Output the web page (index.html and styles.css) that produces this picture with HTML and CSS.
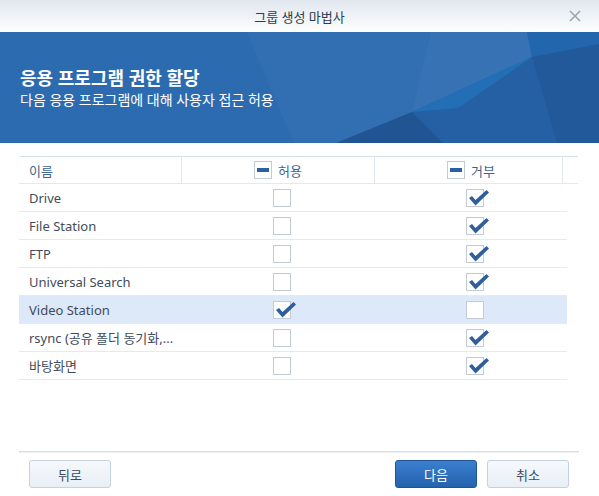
FILE: index.html
```html
<!DOCTYPE html>
<html lang="ko">
<head>
    <meta charset="UTF-8">
    <meta name="viewport" content="width=device-width, initial-scale=1.0">
    <title>그룹 생성 마법사</title>
    <link rel="stylesheet" href="styles.css">
</head>
<body>
    <div class="dialog">
        <div class="titlebar">
            <span></span>
            <span class="title">그룹 생성 마법사</span>
            <span class="close">
                <svg width="12" height="12" viewBox="0 0 12 12"><path d="M1 1L11 11M11 1L1 11" stroke="#a0a5ab" stroke-width="1.6"/></svg>
            </span>
        </div>

        <div class="banner">
            <!-- background facets -->
            <svg class="banner-art" width="599" height="111" viewBox="0 0 599 111">
                <polygon points="247,0 431,0 412,80 336,111 294,111" fill="#ffffff" opacity="0.03"/>
                <polygon points="431,0 527,0 532,25 412,80" fill="#ffffff" opacity="0.05"/>
                <polygon points="527,0 599,0 599,12 532,25" fill="#1c63ae" opacity="0.6"/>
                <polygon points="532,25 599,12 599,111 557,111" fill="#1c4d8c" opacity="0.6"/>
                <polygon points="412,80 532,25 557,111 443,111" fill="#1e5599" opacity="0.5"/>
                <polygon points="412,80 532,25 458,76" fill="#1f82cc" opacity="0.45"/>
                <polygon points="336,111 412,80 443,111" fill="#1b4883" opacity="0.65"/>
            </svg>
            <h1>응용 프로그램 권한 할당</h1>
            <p>다음 응용 프로그램에 대해 사용자 접근 허용</p>
        </div>

        <div class="content">
            <div class="grid-head">
                <div class="hcell name">이름</div>
                <div class="hcell allow"><span class="box partial"><span class="bar"></span></span>허용</div>
                <div class="hcell deny"><span class="box partial"><span class="bar"></span></span>거부</div>
                <div class="hcell gutter"></div>
            </div>

            <div class="row">
                <div class="cell name">Drive</div>
                <div class="cell allow"><span class="box"></span></div>
                <div class="cell deny"><span class="box checked"></span></div>
            </div>
            <div class="row">
                <div class="cell name">File Station</div>
                <div class="cell allow"><span class="box"></span></div>
                <div class="cell deny"><span class="box checked"></span></div>
            </div>
            <div class="row">
                <div class="cell name">FTP</div>
                <div class="cell allow"><span class="box"></span></div>
                <div class="cell deny"><span class="box checked"></span></div>
            </div>
            <div class="row">
                <div class="cell name">Universal Search</div>
                <div class="cell allow"><span class="box"></span></div>
                <div class="cell deny"><span class="box checked"></span></div>
            </div>
            <div class="row selected">
                <div class="cell name">Video Station</div>
                <div class="cell allow"><span class="box checked"></span></div>
                <div class="cell deny"><span class="box"></span></div>
            </div>
            <div class="row">
                <div class="cell name">rsync (공유 폴더 동기화,...</div>
                <div class="cell allow"><span class="box"></span></div>
                <div class="cell deny"><span class="box checked"></span></div>
            </div>
            <div class="row">
                <div class="cell name">바탕화면</div>
                <div class="cell allow"><span class="box"></span></div>
                <div class="cell deny"><span class="box checked"></span></div>
            </div>
        </div>

        <div class="footer">
            <button class="btn">뒤로</button>
            <div class="footer-right">
                <button class="btn primary">다음</button>
                <button class="btn">취소</button>
            </div>
        </div>
    </div>

    <script>
        // draw the check mark into every checked box
        document.querySelectorAll(".box.checked").forEach(function (box) {
            box.innerHTML = '<svg class="tick" width="22" height="18" viewBox="0 0 22 18">' +
                '<polygon points="1,8 4,6 7.5,10 18.5,0 21,2.5 7.5,15.5" fill="#2f5f9b"/></svg>';
        });
    </script>
</body>
</html>
```

FILE: styles.css
```css
body {
    margin: 0;
    background: #ffffff;
    font-family: "Noto Sans", "Noto Sans CJK KR", sans-serif;
}
.dialog {
    width: 599px;
    height: 496px;
    display: flex;
    flex-direction: column;
    overflow: hidden;
}
.titlebar {
    height: 32px;
    display: grid;
    grid-template-columns: 1fr auto 1fr;
    align-items: center;
    background: linear-gradient(#e1e7ef, #fdfefe);
}
.title {
    font-size: 13px;
    color: #2c3c52;
}
.close {
    justify-self: end;
    margin-right: 18px;
    display: flex;
}
.banner {
    position: relative;
    height: 111px;
    padding: 34px 0 0 20px;
    box-sizing: border-box;
    background: #2c6bb0;
    color: #ffffff;
    overflow: hidden;
}
.banner-art {
    position: absolute;
    left: 0;
    top: 0;
}
.banner h1 {
    position: relative;
    margin: 0;
    font-size: 18px;
    line-height: 24px;
    font-weight: bold;
}
.banner p {
    position: relative;
    margin: 0;
    font-size: 14px;
    line-height: 20px;
}
.content {
    height: 308px;
    padding: 13px 0 0 19px;
    box-sizing: border-box;
}
.grid-head {
    width: 559px;
    display: grid;
    grid-template-columns: 163px 193px 188px 15px;
    border-top: 1px solid #d6e1ed;
    border-bottom: 1px solid #e4e9ef;
    height: 28px;
    box-sizing: border-box;
}
.hcell {
    display: flex;
    align-items: center;
    font-size: 13px;
    color: #3e6590;
    border-right: 1px solid #dfe7f1;
}
.hcell.name {
    padding-left: 10px;
}
.hcell.allow, .hcell.deny {
    justify-content: center;
    gap: 6px;
}
.hcell.deny {
    padding-left: 5px;
}
.hcell.gutter {
    border-right: none;
}
.row {
    width: 548px;
    height: 28px;
    display: grid;
    grid-template-columns: 162px 202px 184px;
    border-bottom: 1px solid #e6e9ed;
    box-sizing: border-box;
}
.row.selected {
    background: #dde9f8;
}
.cell {
    display: flex;
    align-items: center;
    font-size: 13px;
    color: #3f4c5b;
}
.cell.name {
    padding-left: 10px;
    white-space: nowrap;
}
.cell.allow, .cell.deny {
    justify-content: center;
}
.box {
    position: relative;
    width: 18px;
    height: 18px;
    box-sizing: border-box;
    border: 1px solid #c3cbd6;
    background: #ffffff;
    display: flex;
    align-items: center;
    justify-content: center;
}
.box .bar {
    width: 12px;
    height: 4px;
    background: #2d609e;
}
.tick {
    position: absolute;
    left: 1px;
    top: 0;
}
.footer {
    flex: 1;
    margin: 0 20px 0 19px;
    border-top: 1px solid #dcdde0;
    box-shadow: inset 0 1px 0 #eeeff1;
    display: flex;
    justify-content: space-between;
    padding: 8px 10px 0 10px;
}
.footer-right {
    display: flex;
    gap: 10px;
}
.btn {
    width: 82px;
    height: 28px;
    font-family: "Noto Sans CJK KR", sans-serif;
    font-size: 13px;
    color: #3c4a5a;
    background: linear-gradient(#f5f8fc, #e9eff6);
    border: 1px solid #c5d1de;
    border-radius: 3px;
    padding: 0;
}
.btn.primary {
    color: #ffffff;
    background: linear-gradient(#3a7fd0, #2462ad);
    border-color: #1f5496;
}
```
